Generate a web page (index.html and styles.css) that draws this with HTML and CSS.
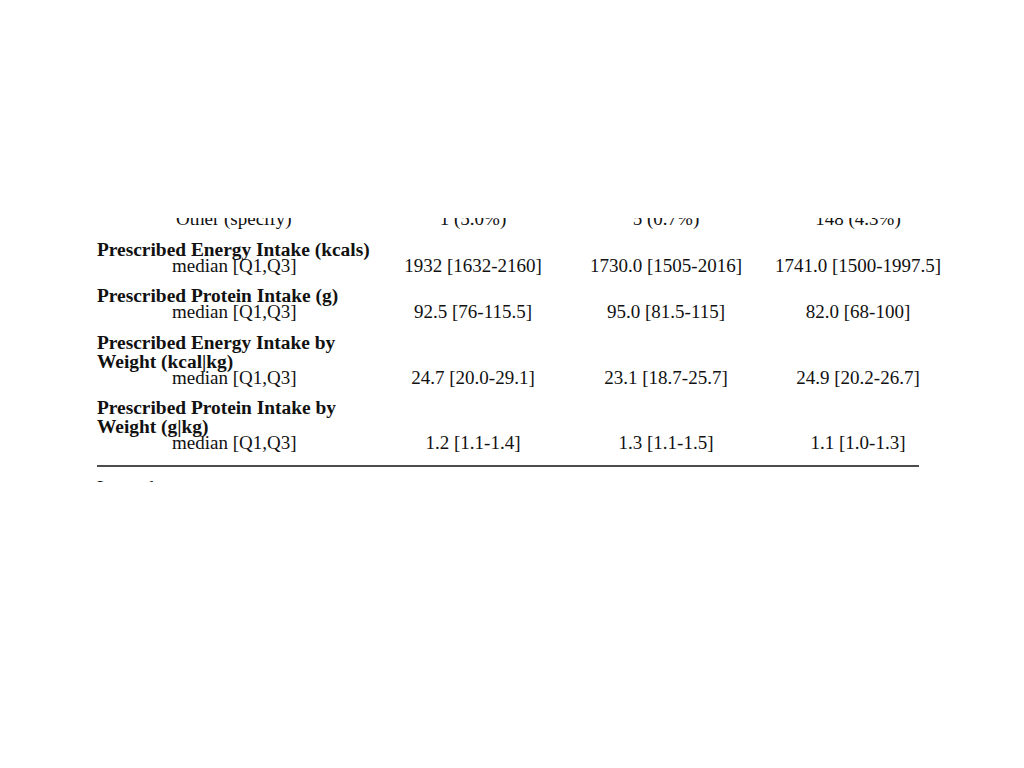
FILE: index.html
```html
<!DOCTYPE html>
<html lang="en">
<head>
<meta charset="utf-8">
<title>Prescribed intake table</title>
<link rel="stylesheet" href="styles.css">
</head>
<body>
<div class="page">
  <div class="window">
    <div class="sheet">
      <div class="table">
        <div class="row">
          <div class="label"><div class="sub other">Other (specify)</div></div>
          <div class="val">1 (5.0%)</div>
          <div class="val">5 (0.7%)</div>
          <div class="val">148 (4.3%)</div>
        </div>
        <div class="row">
          <div class="label">
            <div class="head">Prescribed Energy Intake (kcals)</div>
            <div class="sub">median [Q1,Q3]</div>
          </div>
          <div class="val">1932 [1632-2160]</div>
          <div class="val">1730.0 [1505-2016]</div>
          <div class="val">1741.0 [1500-1997.5]</div>
        </div>
        <div class="row">
          <div class="label">
            <div class="head">Prescribed Protein Intake (g)</div>
            <div class="sub">median [Q1,Q3]</div>
          </div>
          <div class="val">92.5 [76-115.5]</div>
          <div class="val">95.0 [81.5-115]</div>
          <div class="val">82.0 [68-100]</div>
        </div>
        <div class="row">
          <div class="label">
            <div class="head">Prescribed Energy Intake by<br>Weight (kcal|kg)</div>
            <div class="sub">median [Q1,Q3]</div>
          </div>
          <div class="val">24.7 [20.0-29.1]</div>
          <div class="val">23.1 [18.7-25.7]</div>
          <div class="val">24.9 [20.2-26.7]</div>
        </div>
        <div class="row">
          <div class="label">
            <div class="head">Prescribed Protein Intake by<br>Weight (g|kg)</div>
            <div class="sub">median [Q1,Q3]</div>
          </div>
          <div class="val">1.2 [1.1-1.4]</div>
          <div class="val">1.3 [1.1-1.5]</div>
          <div class="val">1.1 [1.0-1.3]</div>
        </div>
      </div>
      <div class="rule"></div>
      <div class="note">Legend:</div>
    </div>
  </div>
</div>
</body>
</html>
```
FILE: styles.css
```css
html, body {
  margin: 0;
  padding: 0;
  background: #ffffff;
}

body {
  font-family: "Liberation Serif", "Times New Roman", serif;
  font-size: 19px;
  color: #111111;
}

.page {
  padding-top: 218px;
}

.window {
  height: 264px;
  overflow: hidden;
}

.sheet {
  margin-top: -9px;
  padding-left: 97px;
}

.table {
  display: flex;
  flex-direction: column;
  gap: 11.5px;
}

.row {
  display: grid;
  grid-template-columns: 281px 190px 196px 188px;
  align-items: end;
}

.head {
  font-weight: bold;
  font-size: 19.4px;
  line-height: 19px;
  white-space: nowrap;
}

.sub {
  line-height: 19px;
  padding-left: 75px;
  white-space: nowrap;
}

.head + .sub {
  margin-top: -3px;
}

.sub.other {
  padding-left: 79px;
}

.val {
  line-height: 19px;
  text-align: center;
  white-space: nowrap;
}

.rule {
  width: 822px;
  margin-top: 13px;
  border-top: 2px solid #4d4d4d;
}

.note {
  margin-top: 11px;
  line-height: 19px;
}
```
